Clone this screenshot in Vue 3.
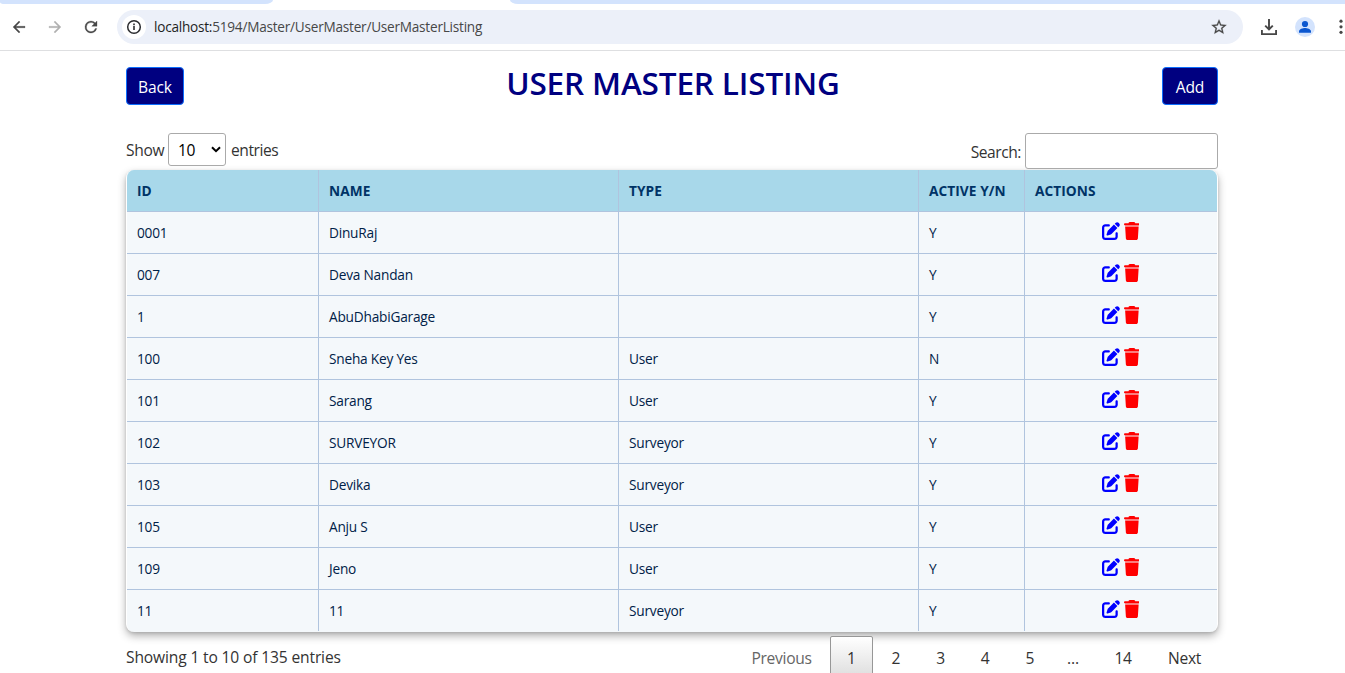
<script setup>
import { ref } from 'vue'

const headings = ['ID', 'NAME', 'TYPE', 'ACTIVE Y/N', 'ACTIONS']
const users = [
  ['0001', 'DinuRaj', '', 'Y'],
  ['007', 'Deva Nandan', '', 'Y'],
  ['1', 'AbuDhabiGarage', '', 'Y'],
  ['100', 'Sneha Key Yes', 'User', 'N'],
  ['101', 'Sarang', 'User', 'Y'],
  ['102', 'SURVEYOR', 'Surveyor', 'Y'],
  ['103', 'Devika', 'Surveyor', 'Y'],
  ['105', 'Anju S', 'User', 'Y'],
  ['109', 'Jeno', 'User', 'Y'],
  ['11', '11', 'Surveyor', 'Y'],
]
const search = ref('')
</script>

<template>
  <div class="window">
    <div class="tabs"><div class="tab-left"></div><div class="tab-gap"></div><div class="tab-right"></div></div>
    <header class="toolbar">
      <svg class="nav back-icon" viewBox="0 0 24 24"><path d="M20 11H7.8l5.6-5.6L12 4l-8 8 8 8 1.4-1.4L7.8 13H20z" /></svg>
      <svg class="nav forward-icon" viewBox="0 0 24 24"><path d="M12 4l-1.4 1.4 5.6 5.6H4v2h12.2l-5.6 5.6L12 20l8-8z" /></svg>
      <svg class="nav reload-icon" viewBox="0 0 24 24"><path d="M17.65 6.35A7.96 7.96 0 0 0 12 4a8 8 0 1 0 7.73 10h-2.08A6 6 0 1 1 12 6c1.66 0 3.14.69 4.22 1.78L13 11h7V4z" /></svg>
      <div class="address">
        <span class="site-info">
          <svg viewBox="0 0 16 16"><circle cx="8" cy="8" r="6.3" fill="none" stroke="#2b2c2f" stroke-width="1.5" /><path d="M7.2 7.1h1.6v4H7.2zM7.2 4.6h1.6v1.6H7.2z" /></svg>
        </span>
        <span class="url"><span class="host">localhost:</span>5194/Master/UserMaster/UserMasterListing</span>
        <svg class="star" viewBox="0 0 24 24"><path d="M22 9.24l-7.19-.62L12 2 9.19 8.63 2 9.24l5.46 4.73L5.82 21 12 17.27 18.18 21l-1.63-7.03zM12 15.4l-3.76 2.27 1-4.28-3.32-2.88 4.38-.38L12 6.1l1.71 4.04 4.38.38-3.32 2.88 1 4.28z" /></svg>
      </div>
      <svg class="download" viewBox="0 0 16 16" fill="none" stroke="#474747" stroke-width="1.9"><path d="M8 0v10M4.2 6.6 8 10.4l3.8-3.8M.9 11v4.1h14.2V11" /></svg>
      <span class="avatar"><svg viewBox="0 0 20 20"><circle cx="10" cy="7" r="3.1" /><path d="M4 15.8v-1.5c0-2.2 4-3.4 6-3.4s6 1.2 6 3.4v1.5z" /></svg></span>
      <svg class="menu" viewBox="0 0 4 16"><circle cx="2" cy="2.2" r="1.6" /><circle cx="2" cy="7.8" r="1.6" /><circle cx="2" cy="13.3" r="1.6" /></svg>
    </header>

    <main>
      <div class="title-row">
        <button class="btn back">Back</button>
        <h1>USER MASTER LISTING</h1>
        <button class="btn add">Add</button>
      </div>

      <div class="filters">
        <div class="length">
          <span class="show">Show</span>
          <span class="select"><span>10</span><svg viewBox="0 0 10 7"><path d="M1 1.2l4 4 4-4" fill="none" stroke="#000" stroke-width="2" /></svg></span>
          <span class="entries">entries</span>
        </div>
        <label class="search"><span>Search:</span><input v-model="search" type="text" /></label>
      </div>

      <div class="table">
        <div class="row head">
          <div v-for="h in headings" :key="h" class="cell">{{ h }}</div>
        </div>
        <div v-for="u in users" :key="u[0]" class="row">
          <div v-for="(c, i) in u" :key="i" class="cell">{{ c }}</div>
          <div class="cell actions">
            <svg class="edit" viewBox="0 0 512 512"><path d="M471.6 21.7c-21.9-21.9-57.3-21.9-79.2 0L362.3 51.7l97.9 97.9 30.1-30.1c21.9-21.9 21.9-57.3 0-79.2L471.6 21.7zm-299.2 220c-6.1 6.1-10.8 13.6-13.5 21.9l-29.6 88.8c-2.9 8.6-.6 18.1 5.8 24.6s15.9 8.7 24.6 5.8l88.8-29.6c8.2-2.7 15.7-7.4 21.9-13.5L437.7 172.3 339.7 74.3 172.4 241.7zM96 64C43 64 0 107 0 160V416c0 53 43 96 96 96H352c53 0 96-43 96-96V320c0-17.7-14.3-32-32-32s-32 14.3-32 32v96c0 17.7-14.3 32-32 32H96c-17.7 0-32-14.3-32-32V160c0-17.7 14.3-32 32-32h96c17.7 0 32-14.3 32-32s-14.3-32-32-32H96z" /></svg>
            <svg class="trash" viewBox="0 0 448 512"><path d="M135.2 17.7L128 32H32C14.3 32 0 46.3 0 64S14.3 96 32 96H416c17.7 0 32-14.3 32-32s-14.3-32-32-32H320l-7.2-14.3C307.4 6.8 296.3 0 284.2 0H163.8c-12.1 0-23.2 6.8-28.6 17.7zM416 128H32L53.2 467c1.6 25.3 22.6 45 47.9 45H346.9c25.3 0 46.3-19.7 47.9-45L416 128z" /></svg>
          </div>
        </div>
      </div>

      <footer>
        <div class="info">Showing 1 to 10 of 135 entries</div>
        <nav class="pages">
          <span class="page previous">Previous</span>
          <span class="page current">1</span>
          <span class="page">2</span>
          <span class="page">3</span>
          <span class="page">4</span>
          <span class="page">5</span>
          <span class="dots">…</span>
          <span class="page wide">14</span>
          <span class="page next">Next</span>
        </nav>
      </footer>
    </main>
  </div>
</template>

<style>
body { margin: 0; overflow: hidden; background: #fff; }
</style>

<style scoped>
* { box-sizing: border-box; }
.window { width: 1345px; height: 673px; overflow: hidden; background: #fff; font-family: "Open Sans", "Noto Sans", sans-serif; font-size: 15.6px; letter-spacing: -0.3px; color: #333; white-space: nowrap; }
svg { display: block; flex: none; }

.tabs { display: flex; height: 4px; background: #fff; }
.tab-left { width: 273px; background: #d3e3fd; border-radius: 0 0 8px 5px / 0 0 4px 2px; }
.tab-gap { width: 237px; }
.tab-right { flex: 1; background: #d3e3fd; border-bottom-left-radius: 8px 4px; }
.toolbar { display: flex; align-items: center; height: 47px; border-bottom: 1px solid #dedfe1; }
.nav { width: 18px; height: 18px; fill: #474747; stroke: #474747; stroke-width: .4; }
.back-icon { margin-left: 10px; }
.forward-icon { margin-left: 18px; fill: #b0b0b0; stroke: #b0b0b0; }
.reload-icon { margin-left: 18px; }
.address { display: flex; align-items: center; width: 1126px; height: 34px; margin-left: 17px; padding: 0 15px 0 5px; border-radius: 17px; background: #ecf0f9; }
.site-info { display: flex; align-items: center; justify-content: center; width: 24px; height: 24px; border-radius: 50%; background: #fff; }
.site-info svg { width: 16px; height: 16px; fill: #2b2c2f; }
.url { margin-left: 8px; padding-bottom: 1px; font-size: 13.6px; letter-spacing: -0.23px; color: #474747; }
.host { color: #1f1f1f; }
.star { width: 18px; height: 18px; margin-left: auto; fill: #474747; stroke: #474747; stroke-width: .3; }
.download { width: 16px; height: 16px; margin-left: 18px; }
.avatar { width: 20px; height: 20px; margin-left: 18px; border-radius: 50%; background: #d3e3fd; }
.avatar svg { width: 20px; height: 20px; fill: #0b57d0; }
.menu { width: 4px; height: 16px; margin-left: 24px; fill: #474747; }

main { width: 1092px; margin-left: 126px; padding-top: 16px; }
.title-row { display: flex; justify-content: space-between; height: 38px; }
.btn { height: 38px; padding: 1px 0 0; border: 1px solid #0d6efd; border-radius: 4px; background: #000080; color: #fff; font: inherit; letter-spacing: -0.15px; }
.back { width: 58px; }
.add { width: 56px; }
h1 { margin: -5px 0 0; font-size: 31.5px; line-height: 42px; letter-spacing: -0.15px; font-weight: 600; color: #000080; }
.filters { display: flex; justify-content: space-between; height: 65px; padding-top: 28px; }
.length { display: flex; align-items: center; height: 33px; }
.show { width: 42px; padding-top: 1px; }
.entries { padding-top: 1px; letter-spacing: -0.45px; }
.select { display: flex; align-items: center; justify-content: space-between; width: 58px; height: 33px; margin-right: 5px; padding: 0 4px 0 9px; border: 1px solid #aaa; border-radius: 3px; color: #000; }
.select span { padding-top: 1px; }
.select svg { width: 10px; height: 7px; }
.search { display: flex; align-items: center; height: 36px; letter-spacing: -0.45px; }
.search span { padding-top: 1px; }
input { width: 193px; height: 36px; margin-left: 4px; border: 1px solid #aaa; border-radius: 3px; background: #fff; }

.table { height: 462px; border: solid #fff; border-width: 0 1px; border-radius: 8px; overflow: hidden; background: #f4f8fb; box-shadow: 0 4px 8px rgba(0, 0, 0, .3), 0 1px 3px rgba(0, 0, 0, .12); }
.row { display: grid; grid-template-columns: 192px 300px 300px 106px 192px; height: 42px; border-bottom: 1px solid #b0c4de; color: #002147; font-size: 13.7px; letter-spacing: -0.22px; }
.row:last-child { border-bottom-color: transparent; }
.cell { display: flex; align-items: center; padding: 0 10px 1px; border-right: 1px solid #b0c4de; }
.cell:last-child { border-right: 0; }
.head { background: #a8d8ea; color: #003366; font-weight: 700; letter-spacing: 0.06px; }
.head .cell { padding: 1px 10px; }
.row .actions { justify-content: center; gap: 4px; padding: 0 11px 3px 10px; }
.edit { width: 18px; height: 18px; fill: #0000ff; }
.trash { width: 15.75px; height: 18px; fill: #ff0000; }

footer { display: flex; justify-content: space-between; }
.info { padding-top: 15px; line-height: 21px; letter-spacing: -0.15px; }
.pages { display: flex; padding-top: 4px; line-height: 44px; text-align: center; }
.page { width: 42.6px; height: 43px; margin-left: 2px; }
.previous { width: 93px; color: #666; }
.current { height: 44px; border: 1px solid #979797; border-radius: 2px; background: linear-gradient(#fff, #dcdcdc); line-height: 42px; }
.dots { width: 44px; }
.wide { width: 52px; margin-left: 2px; }
.next { width: 67px; }
</style>
